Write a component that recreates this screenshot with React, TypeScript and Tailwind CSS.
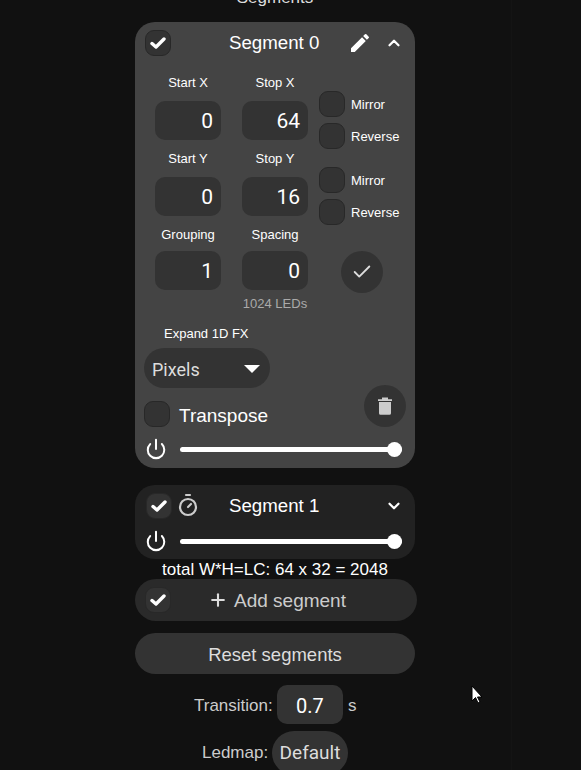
import React from "react";
import { ChevronDown, ChevronUp, Check, Plus, Power, Timer } from "lucide-react";

const font = "font-['Liberation_Sans',Arial,sans-serif]";
const inputFont = "font-['Roboto',sans-serif]";

function Box({ checked = false, className = "" }: { checked?: boolean; className?: string }) {
  return (
    <div className={`flex h-[26px] w-[26px] shrink-0 items-center justify-center rounded-[9px] border border-[#282828] bg-[#333] ${className}`}>
      {checked && (
        <svg width="16" height="12" viewBox="0 0 16 12" fill="none">
          <path d="M2 6.5 6 10 14 2" stroke="#fff" strokeWidth="3.4" strokeLinecap="round" strokeLinejoin="round" />
        </svg>
      )}
    </div>
  );
}

function Field({ label, value, labelGap = "mb-[9px]" }: { label: string; value: string; labelGap?: string }) {
  return (
    <div className="w-[66px]">
      <div className={`h-5 pt-px text-center text-[13px] leading-5 text-white ${labelGap}`}>{label}</div>
      <div className={`flex h-[39px] items-center justify-end rounded-[10px] bg-[#333] pr-2 pt-[3px] text-[21px] text-white ${inputFont}`}>
        {value}
      </div>
    </div>
  );
}

function Toggle({ label }: { label: string }) {
  return (
    <div className="flex h-[26px] items-center gap-[6px]">
      <Box />
      <span className="text-[13px] leading-none text-white">{label}</span>
    </div>
  );
}

function Slider() {
  return (
    <div className="flex h-[20px] items-center pl-[10px] pr-[13px]">
      <Power size={22} strokeWidth={2.2} className="shrink-0 text-white" />
      <div className="relative ml-[13px] h-[5px] flex-1 rounded-full bg-white">
        <div className="absolute right-0 top-[-5px] h-[15px] w-[15px] rounded-full bg-white" />
      </div>
    </div>
  );
}

export default function App() {
  return (
    <div className={`relative h-[770px] overflow-hidden bg-[#111] ${font}`}>
      <div className="absolute bottom-0 left-[511px] top-0 w-px bg-[#141414]" />

      <div className="ml-[135px] w-[282px] pt-[22px]">
        <div className="absolute left-[135px] top-[-12px] w-[280px] text-center text-[17px] leading-5 text-[#ddd]">Segments</div>

        {/* segment 0 */}
        <div className="h-[446px] w-[280px] rounded-[20px] bg-[#444] pt-2">
          <div className="flex h-[26px] items-center pl-[10px]">
            <Box checked />
            <div className="ml-[58px] w-[92px] whitespace-nowrap text-[18.7px] leading-none text-white">Segment 0</div>
            <svg className="ml-[27px]" width="24" height="24" viewBox="0 0 24 24" fill="#fff">
              <path d="M3 17.25V21h3.75L17.81 9.94l-3.75-3.75L3 17.25zM20.71 7.04a1 1 0 0 0 0-1.41l-2.34-2.34a1 1 0 0 0-1.41 0l-1.83 1.83 3.75 3.75 1.83-1.83z" />
            </svg>
            <ChevronUp size={18} strokeWidth={3} className="ml-[13px] text-white" />
          </div>

          <div className="mt-[16px] pl-5">
            <div className="flex h-[76px]">
              <Field label="Start X" value="0" />
              <div className="ml-[21px]"><Field label="Stop X" value="64" /></div>
              <div className="ml-[11px] flex flex-col gap-[6px] pt-[19px]">
                <Toggle label="Mirror" />
                <Toggle label="Reverse" />
              </div>
            </div>
            <div className="flex h-[76px]">
              <Field label="Start Y" value="0" />
              <div className="ml-[21px]"><Field label="Stop Y" value="16" /></div>
              <div className="ml-[11px] flex flex-col gap-[6px] pt-[19px]">
                <Toggle label="Mirror" />
                <Toggle label="Reverse" />
              </div>
            </div>
            <div className="flex h-[66px]">
              <Field label="Grouping" value="1" labelGap="mb-[7px]" />
              <div className="ml-[21px]"><Field label="Spacing" value="0" labelGap="mb-[7px]" /></div>
              <div className="ml-[33px] mt-[27px] flex h-[42px] w-[42px] items-center justify-center rounded-full bg-[#333]">
                <Check size={22} strokeWidth={2} className="text-[#ddd]" />
              </div>
            </div>
          </div>

          <div className="mt-[6px] w-[280px] text-center text-[13px] leading-4 text-[#aaa]">1024 LEDs</div>

          <div className="mt-[14px] pl-[29px] text-[13px] leading-4 text-white">Expand 1D FX</div>
          <div className={`relative ml-[9px] mt-[6px] flex h-10 w-[126px] items-center rounded-[20px] bg-[#333] pl-2 pt-[2px] text-[18px] text-[#ddd] ${inputFont}`}>
            Pixels
            <div className="absolute right-[10px] top-[17px] h-0 w-0 border-x-[8px] border-t-[8px] border-x-transparent border-t-white" />
          </div>

          <div className="relative mt-[13px] flex h-[26px] items-center pl-[9px]">
            <Box />
            <span className="ml-[9px] pt-[2px] text-[19px] leading-none text-white">Transpose</span>
            <div className="absolute left-[229px] top-[-16px] flex h-[42px] w-[42px] items-center justify-center rounded-full bg-[#333]">
              <svg width="14" height="18" viewBox="0 0 14 18" fill="#ccc">
                <path d="M0 2.2h14V4H0zM4 .5h6v1.7H4zM1 5h12v11.2a1.6 1.6 0 0 1-1.6 1.6H2.6A1.6 1.6 0 0 1 1 16.2z" />
              </svg>
            </div>
          </div>

          <div className="mt-3"><Slider /></div>
        </div>

        {/* segment 1 */}
        <div className="mt-[17px] h-[74px] w-[280px] rounded-[20px] bg-[#222] pt-2">
          <div className="flex h-[26px] items-center pl-[11px]">
            <Box checked className="border-[#222]" />
            <Timer size={24} strokeWidth={2.2} className="ml-[4px] mt-[-3px] text-[#ccc]" />
            <div className="ml-[29px] w-[92px] whitespace-nowrap text-[18.7px] leading-none text-white">Segment 1</div>
            <ChevronDown size={18} strokeWidth={3} className="ml-[64px] text-white" />
          </div>
          <div className="mt-[12px]"><Slider /></div>
        </div>

        <div className="flex h-5 w-[280px] items-center justify-center pt-[2px] text-[17px] text-white">
          total W*H=LC: 64 x 32 = 2048
        </div>

        <div className="flex h-[42px] w-[282px] items-center rounded-[21px] bg-[#2a2a2a] pl-[10px]">
          <Box checked className="border-[#222] bg-[#2a2a2a]" />
          <Plus size={20} strokeWidth={2.5} className="ml-[37px] text-[#ddd]" />
          <span className="ml-[6px] text-[19px] leading-none text-[#ccc]">Add segment</span>
        </div>

        <div className="mt-3 flex h-[41px] w-[280px] items-center justify-center rounded-[21px] bg-[#333] pt-[2px] text-[18.5px] text-[#ddd]">
          Reset segments
        </div>

        <div className="mt-[11px] flex h-[39px] w-[280px] items-center">
          <span className="ml-[59px] w-[78px] whitespace-nowrap pt-[3px] text-[17px] text-[#ccc]">Transition:</span>
          <div className={`ml-[5px] flex h-[39px] w-[66px] items-center justify-center rounded-[10px] bg-[#333] pt-[2px] text-[20px] text-white ${inputFont}`}>0.7</div>
          <span className="ml-[5px] pt-[3px] text-[17px] text-[#ccc]">s</span>
        </div>

        <div className="mt-[7px] flex h-[44px] w-[280px] items-center">
          <span className="ml-[67px] w-[66px] whitespace-nowrap text-[17px] text-[#ccc]">Ledmap:</span>
          <div className={`ml-[4px] flex h-[44px] w-[76px] items-center justify-center rounded-[22px] bg-[#333] text-[19px] text-[#ddd] ${inputFont}`}>Default</div>
        </div>
      </div>

      <svg className="absolute left-[471px] top-[685px]" width="13" height="20" viewBox="0 0 13 20">
        <path d="M1 1v15l3.5-3.5 2.5 5.5 2-1-2.5-5H11z" fill="#fff" stroke="#000" strokeWidth="1" />
      </svg>
    </div>
  );
}
